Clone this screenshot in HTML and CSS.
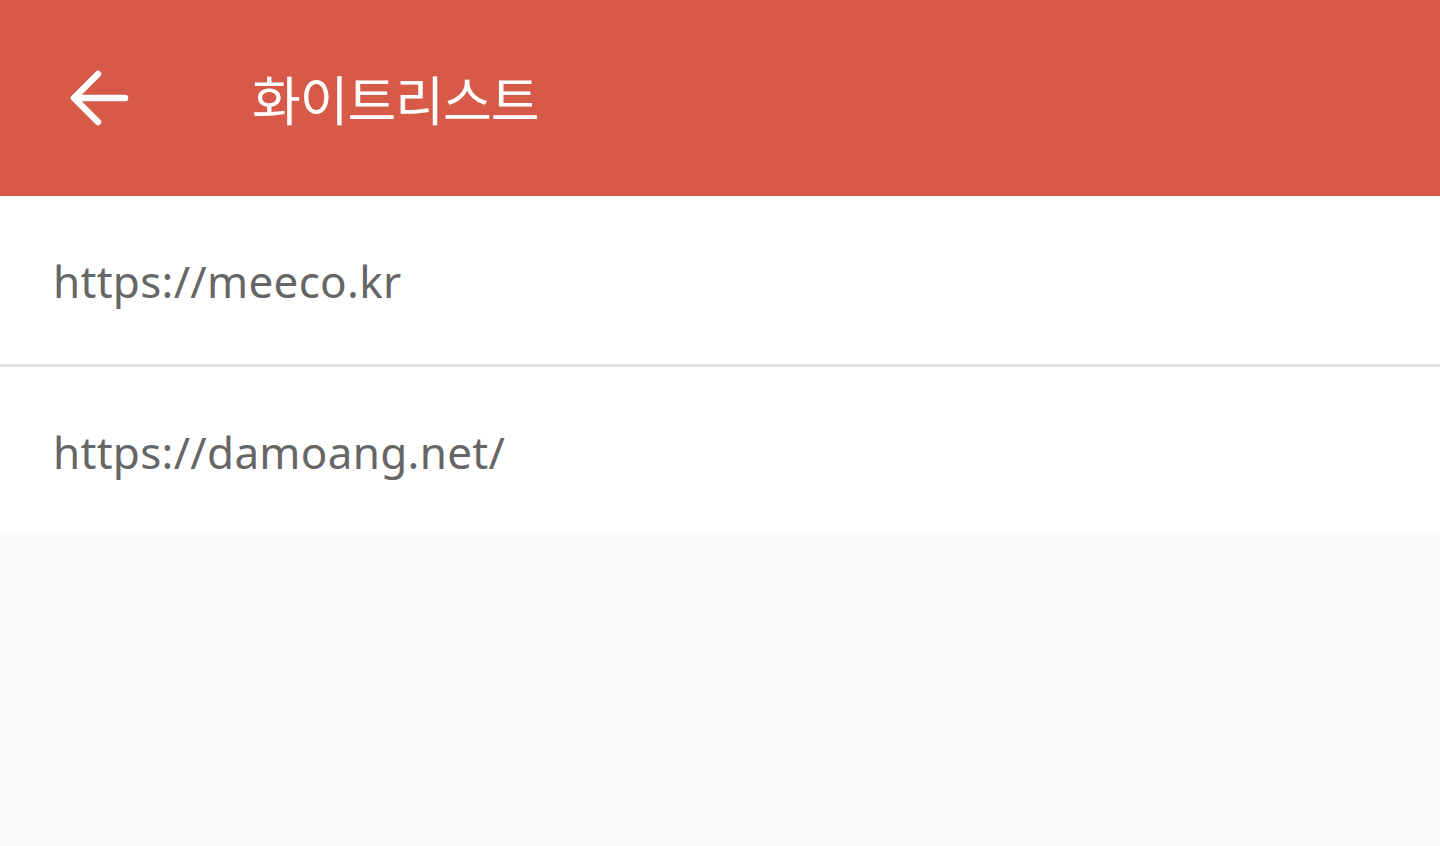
FILE: index.html
```html
<!DOCTYPE html>
<html lang="ko">
<head>
<meta charset="utf-8">
<title>화이트리스트</title>
<link rel="stylesheet" href="styles.css">
</head>
<body>
<header class="appbar">
  <button class="back" aria-label="뒤로">
    <svg width="60" height="60" viewBox="0 0 60 60"><path d="M56 29H6M29 5 5 29l24 24" fill="none" stroke="#fff" stroke-width="6.5" stroke-linecap="round" stroke-linejoin="round"/></svg>
  </button>
  <h1 class="title">화이트리스트</h1>
</header>
<ul class="list">
  <li class="item">https://meeco.kr</li>
  <li class="item">https://damoang.net/</li>
</ul>
</body>
</html>
```
FILE: styles.css
```css
html, body {
  margin: 0;
  padding: 0;
  height: 100%;
  background: #f9f9f9;
  font-family: "Noto Sans", "Noto Sans CJK KR", sans-serif;
}
.appbar {
  height: 196px;
  background: #d75a48;
  display: flex;
  align-items: center;
  box-sizing: border-box;
  padding-left: 69px;
}
.back {
  background: none;
  border: 0;
  padding: 0;
  margin: 0;
  width: 60px;
  height: 60px;
  display: flex;
  margin-top: 2px;
}
.title {
  margin: 0 0 0 123px;
  color: #fff;
  font-family: "Noto Sans CJK KR", sans-serif;
  font-weight: 400;
  font-size: 53px;
  letter-spacing: -1px;
  line-height: 1;
}
.list {
  list-style: none;
  margin: 0;
  padding: 0;
  background: #fff;
}
.item {
  height: 168px;
  display: flex;
  align-items: center;
  padding-left: 53px;
  color: #666;
  font-size: 44px;
  letter-spacing: 0.3px;
  line-height: 1;
  padding-top: 2px;
  box-sizing: border-box;
}
.item + .item {
  border-top: 3px solid #e0e0e0;
  height: 171px;
}
```
